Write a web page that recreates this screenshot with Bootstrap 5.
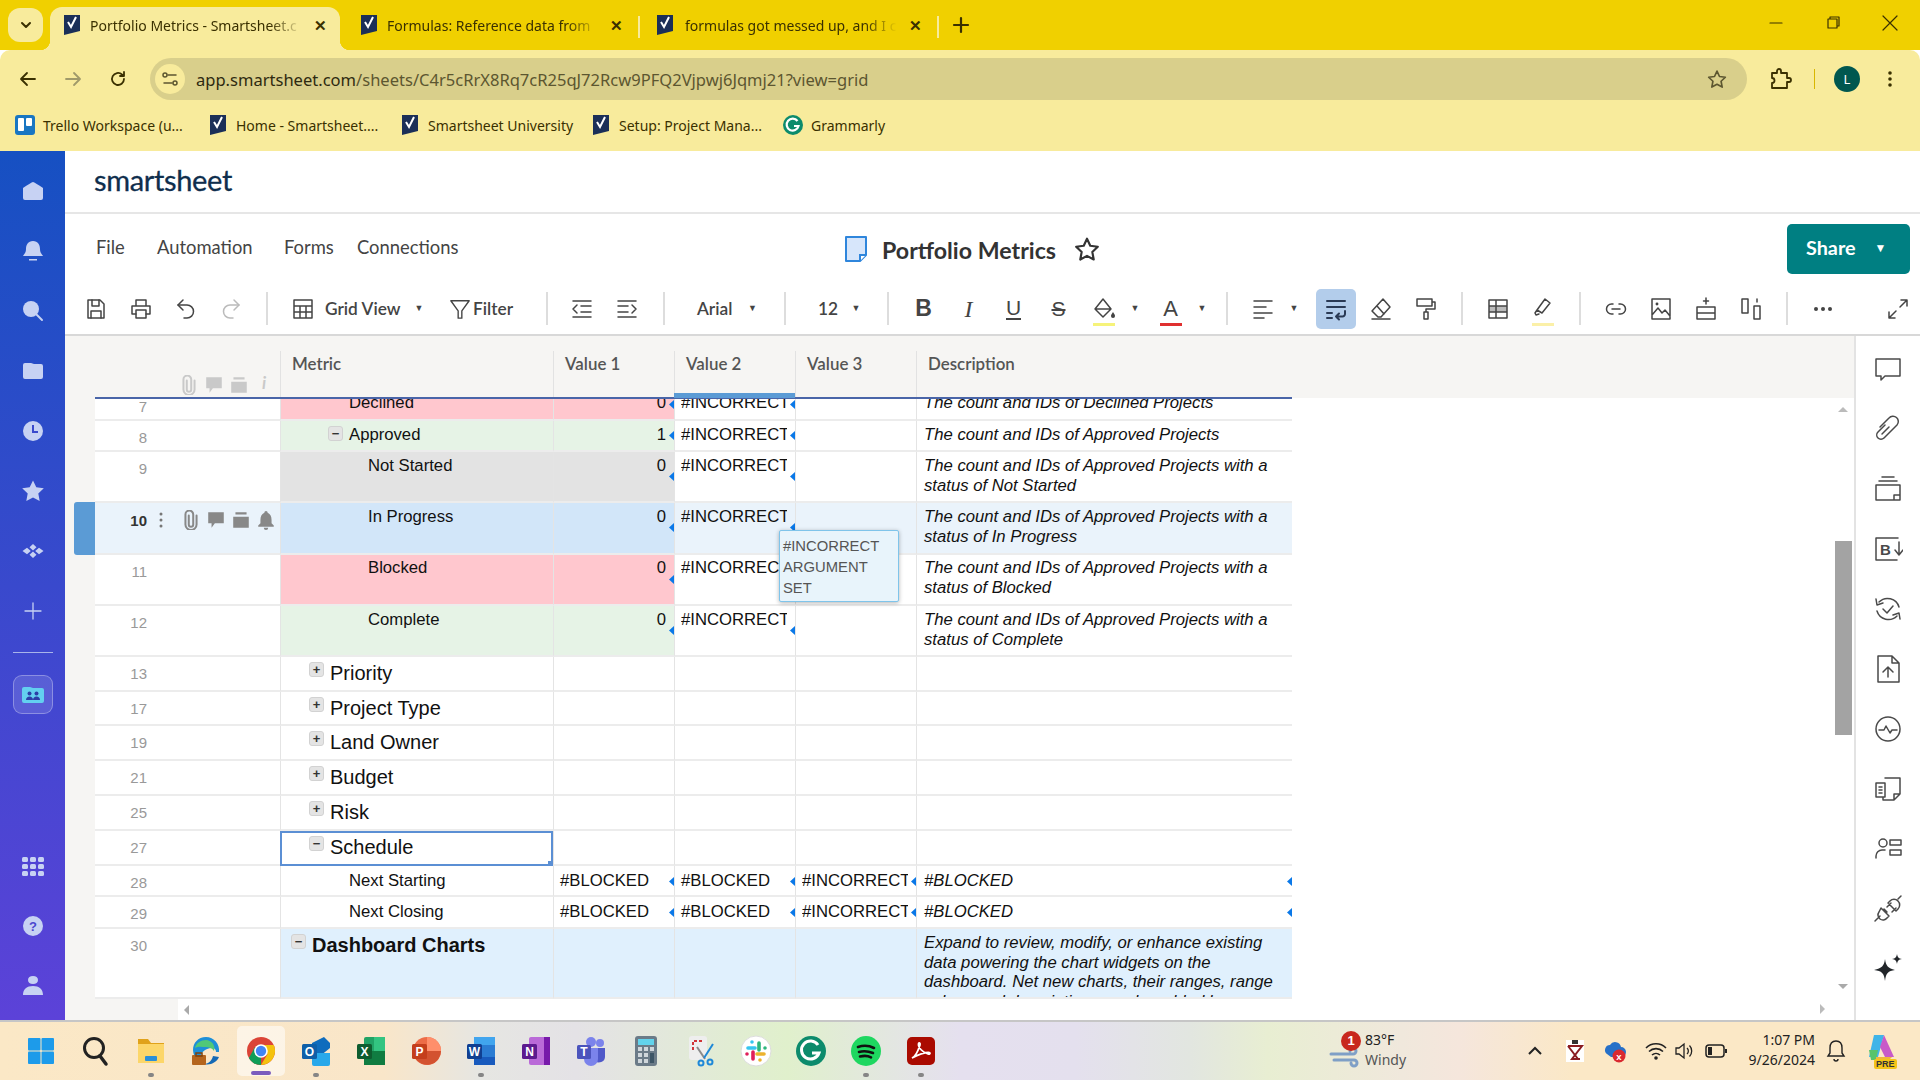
<!DOCTYPE html>
<html lang="en">
<head>
<meta charset="utf-8">
<title>Portfolio Metrics - Smartsheet</title>
<link rel="stylesheet" href="https://cdn.jsdelivr.net/npm/bootstrap@5.3.0/dist/css/bootstrap.min.css">
<style>
:root{--ar:"Liberation Sans",Arial,sans-serif;--ui:"Noto Sans",sans-serif;--sm:Lato,"Noto Sans",sans-serif}
html,body{width:1920px;height:1080px;overflow:hidden;margin:0;background:#fff;font-family:var(--ar)}
.ic{fill:none;stroke:currentColor;stroke-width:1.5;stroke-linecap:round;stroke-linejoin:round;display:block}
.s24{width:24px;height:24px}.s20{width:20px;height:20px}.s30{width:30px;height:30px}.s32{width:32px;height:32px}
.ff{fill:currentColor;stroke:none}
/* browser chrome */
.tabstrip{height:50px;background:#f0d000;padding-left:8px;color:#3a3000;font:14px var(--ui)}
.tabdown{width:35px;height:34px;margin-top:8px;border-radius:12px;background:#f8eb9c}
.chtab{height:43px;margin-top:7px;position:relative;flex:none;padding-bottom:7px}
.chtab.on{width:290px;margin-left:7px;background:#f8eb9c;border-radius:12px 12px 0 0;padding-left:12px}
.chtab.on::after,.chtab.on::before{content:"";position:absolute;bottom:0;width:10px;height:10px}
.chtab.on::after{right:-10px;background:radial-gradient(circle at 100% 0,transparent 10px,#f8eb9c 10.5px)}
.chtab.on::before{left:-10px;background:radial-gradient(circle at 0 0,transparent 10px,#f8eb9c 10.5px)}
.chtab.t2{width:300px;padding-left:11px}.chtab.t3{width:299px;padding-left:7px}
.chtab.t2::after,.chtab.t3::after{content:"";position:absolute;right:0;top:9px;height:22px;width:2px;background:#f8eb9c}
.chfav{width:20px;height:20px;flex:none}
.chtitle{white-space:nowrap;margin-left:8px;width:208px;flex:none;font-size:14px;-webkit-mask-image:linear-gradient(90deg,#000 180px,transparent 212px);mask-image:linear-gradient(90deg,#000 180px,transparent 212px)}
.t3 .chtitle{margin-left:10px;width:213px}
.chx{margin-left:14px;font-size:15px;font-weight:600;line-height:1;width:16px;text-align:center}
.t2 .chx{margin-left:13px}.t3 .chx{margin-left:9px}
.winbtn{width:57px;height:46px}
.winset{margin-right:2px}
.addrrow{height:58px;background:#f8eb9c;border-radius:10px 10px 0 0;padding:8px 0 8px 5px;color:#3a3000}
.navb{width:45px;height:42px}
.addr{width:1597px;height:42px;margin-left:10px;border-radius:21px;background:#d9cf8b;font:16.55px var(--ui);color:#5c5630;padding:0 20px 0 5px}
.addr b{font-weight:400;color:#2e2a10}
.sitebtn{width:30px;height:30px;border-radius:50%;background:#f8eb9c;margin-right:11px}
.extsl{width:40px;margin-left:13px}.chsep{width:1px;height:20px;background:#d8b600;margin-left:14px}
.avat{width:26px;height:26px;border-radius:50%;background:#00574f;color:#fff;font:13px var(--ui);margin-left:19px}
.bmrow{height:43px;background:#f8eb9c;padding:0 0 9px 15px;font:14px var(--ui);color:#3a3000}
.bmk{height:34px;flex:none}.bm1{width:193px}.bm2{width:192px}.bm3{width:192px}.bm4{width:191px}
.bmk svg{width:20px;height:20px;margin-right:8px;flex:none}
.pagewrap{height:869px}
/* sidebar */
.rail{width:65px;flex:none;height:869px;background:linear-gradient(180deg,#1650c2,#5c42d8);color:#c7d2f3;padding:10px 0 4px}
.railb{height:60px;width:65px;flex:none}
.railrule{width:40px;height:1px;background:#a9b4ea;margin:11px 0 22px}
.railbox{width:40px;height:39px;border-radius:9px;border:1px solid rgba(255,255,255,.3);background:rgba(255,255,255,.13)}
/* app header */
.logorow{height:63px;border-bottom:2px solid #e6e6e6;padding-left:29px}
.logotxt{font:400 29px/1 var(--sm);color:#0f2e4d;letter-spacing:-.35px;margin-bottom:4px;-webkit-text-stroke:.3px #0f2e4d}
.menurow{height:69px;padding-left:31px;color:#444;font:18.4px var(--sm)}
.menul{width:748px;flex:none;margin-bottom:3px}
.mi1{width:61px}.mi2{width:127px}.mi3{width:73px}
.ttl{font:700 23.2px var(--sm);color:#333;margin-top:2px}
.docic{width:24px;height:28px;margin-right:14px}
.starb{width:26px;height:26px;margin-left:18px;color:#333}
.sharebtn{width:123px;height:50px;margin-left:auto;margin-right:10px;background:#007f82;color:#fff;border:0;border-radius:5px;font:700 19.8px var(--sm);padding:0 0 3px 19px}
.sharebtn i{font-style:normal;font-size:12px;margin-left:19px}
.tbar{height:53px;padding:0 0 0 8px;border-bottom:2px solid #d8d8d8;color:#444;position:relative}
.tg{display:flex;align-items:center;height:51px;flex:none}
.g1{width:193px}.g2{width:278px;padding-left:12px}.g3{width:115px;padding-left:11px}.g4{width:119px;padding-left:32px}.g5{width:101px;padding-left:32px}.g6{width:337px;padding-left:12px}.g7{width:233px;padding-left:12px}.g8{width:116px;padding-left:12px}.g9{width:205px;padding-left:12px}.g10{width:132px;padding-left:12px}
.tsep{width:2px;height:33px;background:#ddd;flex:none}
.ti{width:45px;height:40px;flex:none;position:relative}
.ti.off{color:#bbb}
.tc{width:18px;font-size:9px;text-align:center;flex:none;color:#444}
.tc-a{margin-left:11px}.tc-n{margin-left:9px}
.tt{font:600 17.3px var(--sm);color:#444;white-space:nowrap}
.tg2tx{width:85px}.fltic{margin-left:21px;width:22px;height:22px}
.flttx{margin-left:2px}
.lb{font-family:var(--ar);font-size:22px;line-height:1;color:#444}
.lb-b{font-weight:700;font-size:23px}
.lb-i{font-family:"Liberation Serif",serif;font-style:italic;font-size:24px}
.lb-u,.lb-s{font-size:21px}
.lb-u{border-bottom:2px solid #444;padding-bottom:0;line-height:20px}
.lb-s{text-decoration:line-through;text-decoration-thickness:1.5px}
.bar{position:absolute;left:50%;margin-left:-11px;width:22px;height:3px;bottom:3px}
.bar-y{background:#f6f37a}.bar-h{background:#fbf0a8}.bar-r{background:#e03030}
.ti-on{width:40px;height:40px;background:#b3cdeb;border-radius:5px;margin:0 2.5px 0 12.5px;color:#2a3a55;flex:none}
.gapb{margin-left:4px}.gapc{margin-left:30px}
/* grid */
.gridarea{position:relative;width:1789px;height:684px;flex:none}
.ghead{height:62px;background:#f6f5f3;position:relative;display:grid;grid-template-columns:215px 273px 121px 121px 121px 376px;font:600 16.9px var(--sm);color:#555}
.hc{border-left:1px solid #e2e2e2;margin-top:15px;padding:2px 0 0 11px;height:47px}
.hc0{border:0;padding:0;position:relative}
.hics{position:absolute;left:114px;top:21px;color:#c9c9c9}
.hics>div{width:25px}
.frozen{position:absolute;left:30px;width:1197px;height:2px;bottom:-1px;background:#4a65a8;z-index:3}
.colmark{position:absolute;left:609px;width:121px;height:5px;bottom:0;background:#5b9bd5;z-index:4}
.gbody{height:601px;overflow:hidden;padding-left:30px;background:linear-gradient(90deg,#f6f5f3 30px,#fff 30px);font:16.7px/19.6px var(--ar);color:#111}
.gr{display:grid;grid-template-columns:185px 273px 121px 121px 121px 376px;width:1197px;position:relative;background:#fff}
.gr:first-child{margin-top:-8px}
.r31{height:31px}.r32{height:32px}.r34{height:34px}.r35{height:35px}.r51{height:51px}.r52{height:52px}.r70{height:70px}
.cl{border-bottom:2px solid #ececec;border-left:1px solid #e4e4e4;position:relative;padding:4px 8px 0 6px;overflow:hidden;white-space:nowrap}
.up1 .cl{padding-top:3px}
.rn,.up1 .rn{border-left:0;padding:7px 0 0 0;display:flex;color:#999;font-size:15px;overflow:visible}
.rnum{width:52px;text-align:right;flex:none}
.bg-r{background:#ffc7ce}.bg-g{background:#e6f3e6}.bg-k{background:#e3e3e3}.bg-b{background:#d2e6f9}.bg-d{background:#e0f0fd}
.sel{background:#eaf3fb}
.sel .rn{color:#333;font-weight:700;padding-top:8px}
.rowdots{margin-right:1px;flex:none}
.ricons{color:#888;margin-top:-1px}.ricons svg{margin-right:5px;flex:none}
.rowtab{position:absolute;left:-21px;top:-1px;width:21px;height:53px;background:#5b9bd5;border-radius:3px 0 0 3px}
.dsc{font-style:italic;white-space:normal;padding-right:15px;padding-left:7px}
.i1{padding-left:10px}.i2{padding-left:28px}.i3{padding-left:47px}.i4{padding-left:87px}.i3t{padding-left:68px}
.big{font-size:20px;line-height:25px;padding-top:4px}.bd{padding-top:4px;font-weight:700}
.xb{display:inline-flex;align-items:center;justify-content:center;width:15px;height:15px;border-radius:3px;background:#e4e4e4;border:1px solid #d2d2d2;font:700 13px/1 var(--ar);color:#333;margin-right:6px;vertical-align:top;margin-top:1px}
.big .xb{margin-top:1px}
.bd .xb{margin-top:1px}
.pt5{padding-top:5px}
.tx{display:block;overflow:hidden}
.fx{position:absolute;right:0;top:10px;width:5px;height:9px;background:#0a78e8;clip-path:polygon(100% 0,0 50%,100% 100%)}
.fx2{top:20px}.fx3{top:11px}
.curcell{outline:2px solid #5b8fd4;outline-offset:-2px;border-bottom-color:transparent;overflow:visible}
.curcell::after{content:"";position:absolute;right:0;bottom:-2px;width:5px;height:5px;background:#5b8fd4}
.ttip{position:absolute;left:714px;top:194px;width:120px;height:72px;background:#e8f4fb;border:1px solid #7fc4ea;box-shadow:0 1px 4px rgba(0,0,0,.3);font:14.8px/21px var(--ar);color:#555;padding:5px 3px;z-index:6;border-radius:2px}
.gfoot{height:21px;background:linear-gradient(90deg,#f6f5f3 113px,#fff 113px)}
.sthumb{position:absolute;left:1770px;top:205px;width:17px;height:194px;background:#a3a3a3;z-index:5}
.ar{position:absolute;width:0;height:0;border-style:solid;z-index:5}
.ar-u{left:1773px;top:71px;border-width:0 5px 5px 5px;border-color:transparent transparent #bbb}
.ar-d{left:1773px;top:648px;border-width:5px 5px 0 5px;border-color:#aaa transparent transparent}
.ar-l{left:119px;top:669px;border-width:5px 5px 5px 0;border-color:transparent #aaa transparent transparent}
.ar-r{left:1755px;top:668px;border-width:5px 0 5px 5px;border-color:transparent transparent transparent #bbb}
.rpanel{width:66px;height:684px;flex:none;border-left:2px solid #e3e3e3;padding-top:3px;color:#4a4a4a}
.rpb{height:60px}
/* taskbar */
.winbar{height:60px;border-top:2px solid #c6c6c6;padding-left:13px;background:linear-gradient(90deg,#fbe8c6 0,#f9e6c9 20%,#e6e6e2 25%,#e4e2e6 30%,#e0f0cc 41%,#e5e0ef 50%,#e4e0ee 56%,#e2e6e0 62%,#e8eed2 66%,#f0e8dc 73%,#f5e6dc 76%,#fbe8c6 82%);font:14px var(--ui);color:#222}
.tbi{width:55px;height:58px;flex:none;position:relative}
.tbi.act::before{content:"";position:absolute;left:3.5px;right:3.5px;top:4px;bottom:4px;border-radius:5px;background:rgba(255,255,255,.55)}
.tbi svg{width:32px;height:32px;position:relative}
.run::after{content:"";position:absolute;left:50%;margin-left:-3px;bottom:3px;width:6px;height:4px;border-radius:2px;background:#858585}
.act::after{content:"";position:absolute;left:50%;margin-left:-10px;bottom:5px;width:20px;height:4px;border-radius:2px;background:#7a5bbd}
.tray{margin-left:auto;margin-right:24px;height:58px}
.wxsl{position:relative;width:36px;height:40px;flex:none}
.wxb{position:absolute;left:12px;top:0;width:20px;height:20px;border-radius:50%;background:#c8281e;color:#fff;font:700 13px/20px var(--ar);text-align:center}
.wxt{width:161px;line-height:20px;flex:none;margin-bottom:3px}
.wxw{color:#555;display:block}
.tr-red{margin-left:22px}.tr-cl{margin-left:19px}.tr-wf{margin-left:18px}.tr-sn{margin-left:7px}.tr-bt{margin-left:11px}
.clk{width:88px;text-align:right;line-height:20px;margin-bottom:3px;flex:none}
.tr-bell{margin-left:10px}
.copi{margin-left:19px;position:relative;width:30px;height:36px;flex:none}
.prebadge{position:absolute;left:8px;bottom:0;font:700 9px/10px var(--ar);background:#f5c518;color:#333;border-radius:2px;padding:0 2px}
</style>
</head>
<body>
<svg class="d-none" xmlns="http://www.w3.org/2000/svg">
<symbol id="ss" viewBox="0 0 20 20"><path fill="#1b2f58" d="M2 0h16v16L2 20z"/><path fill="none" stroke="#fff" stroke-width="2" d="M6 7l3 5 5-10"/></symbol>
<symbol id="save" viewBox="0 0 24 24"><path d="M4 3h12l4 4v14H4z"/><path d="M8 3v6h7V3M7 21v-7h10v7"/></symbol>
<symbol id="print" viewBox="0 0 24 24"><path d="M7 9V3h10v6M7 17H3V9h18v8h-4"/><path d="M7 13h10v8H7z"/></symbol>
<symbol id="undo" viewBox="0 0 24 24"><path d="M9 3L4 8l5 5"/><path d="M4 8h9a6.500 6.500 0 0 1 0 13h-3"/></symbol>
<symbol id="redo" viewBox="0 0 24 24"><path d="M15 3l5 5-5 5"/><path d="M20 8h-9a6.500 6.500 0 0 0 0 13h3"/></symbol>
<symbol id="tbl" viewBox="0 0 24 24"><path d="M3 3h18v18H3zM3 9h18M3 15h18M9 9v12M15 9v12"/></symbol>
<symbol id="funnel" viewBox="0 0 24 24"><path d="M2 3h20l-8 11v8h-4v-8z"/></symbol>
<symbol id="outd" viewBox="0 0 24 24"><path d="M3 4h18M3 20h18M11 9h10M11 15h10M7 8l-4 4 4 4"/></symbol>
<symbol id="ind" viewBox="0 0 24 24"><path d="M3 4h18M3 20h18M3 9h10M3 15h10M17 8l4 4-4 4"/></symbol>
<symbol id="fill" viewBox="0 0 24 24"><path d="M11 2L3 12l8 8 8-8zM3 12h16"/><path fill="currentColor" stroke="none" d="M21 15c1.500 2.200 2 3 2 4a2 2 0 0 1-4 0c0-1 .5-1.800 2-4z"/></symbol>
<symbol id="align" viewBox="0 0 24 24"><path d="M3 4h18M3 10h12M3 16h18M3 21h10"/></symbol>
<symbol id="wrap" viewBox="0 0 24 24"><path stroke-width="2" d="M3 4h18M3 10h18M3 16h5M3 21h5"/><path stroke-width="2" d="M21 14v3a2.500 2.500 0 0 1-2.500 2.500H12M15 16.500l-3 3 3 3"/></symbol>
<symbol id="eraser" viewBox="0 0 24 24"><path d="M14 2l7 8-9 10H9l-6-6zM8 9l7 8M3 22h18"/></symbol>
<symbol id="roller" viewBox="0 0 24 24"><path d="M3 2h15v7H3zM18 5h3v7h-9v3M10 15h4v7h-4z"/></symbol>
<symbol id="tblm" viewBox="0 0 24 24"><path fill="#bbb" stroke="none" d="M3 9h18v6H3z"/><path d="M3 3h18v18H3zM3 9h18M3 15h18M10 3v18"/></symbol>
<symbol id="hilite" viewBox="0 0 24 24"><path d="M14 2l5 4-8 10-5-3zM6 13l-2 3 1 2 3-1"/></symbol>
<symbol id="link" viewBox="0 0 24 24"><path d="M9 7H7.500a5 5 0 0 0 0 10H9M15 7h1.500a5 5 0 0 1 0 10H15M8 12h8"/></symbol>
<symbol id="img" viewBox="0 0 24 24"><path d="M3 2h18v20H3zM3 18l6-7 4 5 3-3 5 6"/><circle cx="8" cy="7" r=".7"/></symbol>
<symbol id="insr" viewBox="0 0 24 24"><path d="M3 10h18v12H3zM3 16h18M12 1v6M9.500 4h5"/></symbol>
<symbol id="insc" viewBox="0 0 24 24"><path d="M3 2h6v14H3zM15 9h6v13h-6zM18 2v3"/></symbol>
<symbol id="more" viewBox="0 0 24 24"><circle fill="currentColor" stroke="none" cx="5" cy="12" r="2"/><circle fill="currentColor" stroke="none" cx="12" cy="12" r="2"/><circle fill="currentColor" stroke="none" cx="19" cy="12" r="2"/></symbol>
<symbol id="expand" viewBox="0 0 24 24"><path d="M14 10l7-7M15 3h6v6M10 14l-7 7M3 15v6h6"/></symbol>
<symbol id="clip" viewBox="0 0 18 18"><path fill="none" stroke="currentColor" stroke-width="1.800" stroke-linecap="round" d="M7 5v8a2 2 0 0 0 4 0V4a3.500 3.500 0 0 0-7 0v9a5 5 0 0 0 10 0V5"/></symbol>
<symbol id="cmt" viewBox="0 0 18 18"><path fill="currentColor" d="M2 2h14v10H8l-3 4v-4H2z"/></symbol>
<symbol id="card" viewBox="0 0 18 18"><path fill="currentColor" d="M2 6h14v10H2zM4 2h10v2H4z"/></symbol>
<symbol id="rbell" viewBox="0 0 18 18"><path fill="currentColor" d="M9 1a1.500 1.500 0 0 1 1.500 1.500C13 3.500 14 6 14 9v3l2 2v1H2v-1l2-2V9c0-3 1-5.500 3.500-6.500A1.500 1.500 0 0 1 9 1zM7 16h4a2 2 0 0 1-4 0z"/></symbol>
<symbol id="rhome" viewBox="0 0 24 24"><path fill="currentColor" d="M12 3c1 0 9 5 10 6v10a2 2 0 0 1-2 2H4a2 2 0 0 1-2-2V9c1-1 9-6 10-6z"/></symbol>
<symbol id="rbl" viewBox="0 0 24 24"><path fill="currentColor" d="M12 2c5 0 7 4 7 8 0 4 2 5 3 7H2c1-2 3-3 3-7 0-4 2-8 7-8zM8 20h8v1.500H8z"/></symbol>
<symbol id="rsr" viewBox="0 0 24 24"><circle fill="currentColor" cx="10" cy="10" r="8"/><path stroke="currentColor" stroke-width="2" stroke-linecap="round" d="M15 15l6 6"/></symbol>
<symbol id="rfd" viewBox="0 0 24 24"><path fill="currentColor" d="M4 4h6c1 0 2 1 3 1h7a2 2 0 0 1 2 2v11a2 2 0 0 1-2 2H4a2 2 0 0 1-2-2V6a2 2 0 0 1 2-2z"/></symbol>
<symbol id="rck" viewBox="0 0 24 24"><circle fill="currentColor" cx="12" cy="12" r="10"/><path fill="none" stroke="#3a49cc" stroke-width="2" d="M12 6v7h5"/></symbol>
<symbol id="rst" viewBox="0 0 24 24"><path fill="currentColor" d="M12 1.500l3.300 6.800 7.500 1-5.500 5.200 1.400 7.500L12 18.400l-6.700 3.600 1.400-7.500L1.200 9.300l7.500-1z"/></symbol>
<symbol id="rap" viewBox="0 0 24 24"><path fill="currentColor" d="M12 5l3.500 3.200L12 11.400 8.500 8.200zM12 12.600l3.500 3.200L12 19l-3.500-3.200zM6 8.800L9.800 12 6 15.200 1.500 12zM18 8.800l4.500 3.200-4.500 3.200L14.200 12z"/></symbol>
<symbol id="rgr" viewBox="0 0 24 24"><g fill="currentColor"><rect x="1" y="3" width="6" height="5" rx="1.500"/><rect x="9" y="3" width="6" height="5" rx="1.500"/><rect x="17" y="3" width="6" height="5" rx="1.500"/><rect x="1" y="10" width="6" height="5" rx="1.500"/><rect x="9" y="10" width="6" height="5" rx="1.500"/><rect x="17" y="10" width="6" height="5" rx="1.500"/><rect x="1" y="17" width="6" height="5" rx="1.500"/><rect x="9" y="17" width="6" height="5" rx="1.500"/><rect x="17" y="17" width="6" height="5" rx="1.500"/></g></symbol>
<symbol id="rus" viewBox="0 0 24 24"><path fill="currentColor" d="M12 2c3 0 5 1.500 5 4s-2 4-5 4-5-1.500-5-4 2-4 5-4zM12 12c6 0 10 3 10 9H2c0-6 4-9 10-9z"/></symbol>
<symbol id="pcmt" viewBox="0 0 30 30"><path d="M3 5h24v17H12l-4 4v-4H3z"/></symbol>
<symbol id="pclip" viewBox="0 0 30 30"><path d="M12 11l-7 7a4 4 0 0 0 6 6l13-13a5 5 0 0 0-8-7L7 13M16 13l-7 7"/></symbol>
<symbol id="pcard" viewBox="0 0 30 30"><path d="M9 3h12M6 7h18M3 11h24v15H3zM27 21h-6v5"/></symbol>
<symbol id="pbl" viewBox="0 0 30 30"><path d="M25 4H3v22h21"/><path d="M26 8v12M22 16l4 5 4-5"/><text x="7" y="21" font-family="Liberation Sans,sans-serif" font-weight="700" font-size="15" fill="currentColor" stroke="none">B</text></symbol>
<symbol id="pcyc" viewBox="0 0 30 30"><path d="M6 8a12 12 0 0 1 20 5M24 22a12 12 0 0 1-20-5M3 5l1 6 6-2M27 25l-1-6-6 2M10 15l4 4 6-7"/></symbol>
<symbol id="pup" viewBox="0 0 30 30"><path d="M5 2h14l7 7v19H5zM19 2v7h7M15 23V13M10 18l5-5 5 5"/></symbol>
<symbol id="pact" viewBox="0 0 30 30"><circle cx="15" cy="15" r="12"/><path d="M6 16h5l2-4 4 7 2-3h5"/></symbol>
<symbol id="pdoc" viewBox="0 0 30 30"><path d="M3 9h9v14H3zM12 4h15v16l-6 6H10v-3M27 20h-6v6M6 13h3M6 16h3M6 19h3"/></symbol>
<symbol id="ppl" viewBox="0 0 30 30"><circle cx="10" cy="9" r="4"/><path d="M3 24v-2a6 6 0 0 1 6-6h3M17 6h11v5H17zM17 16h11v5H17z"/></symbol>
<symbol id="plug" viewBox="0 0 30 30"><path d="M2 27l5-5M8 14l8 8-2 2a5 5 0 0 1-8-6zM14 13l4-4M19 18l4-4M15 9l8 8 2-2a5 5 0 0 0-8-8zM25 5l3-3M11 15l3 3"/></symbol>
<symbol id="spark" viewBox="0 0 30 30"><path fill="currentColor" stroke="none" d="M12 5c1 7 3 9 10 11-7 1-9 3-10 11-1-8-3-10-11-11 8-2 10-4 11-11zM24 0c.5 3 1.500 4.500 5 5-3.500.5-4.500 2-5 5-.5-3-1.500-4.500-5-5 3.500-.5 4.500-2 5-5z"/></symbol>
</svg>

<div class="tabstrip d-flex">
  <div class="tabdown d-flex align-items-center justify-content-center"><svg class="ic s20" viewBox="0 0 20 20"><path stroke-width="2" d="M6 8l4 4 4-4"/></svg></div>
  <div class="chtab on d-flex align-items-center"><svg class="chfav"><use href="#ss"/></svg><div class="chtitle">Portfolio Metrics - Smartsheet.c</div><div class="chx">✕</div></div>
  <div class="chtab t2 d-flex align-items-center"><svg class="chfav ms-2"><use href="#ss"/></svg><div class="chtitle">Formulas: Reference data from</div><div class="chx">✕</div></div>
  <div class="chtab t3 d-flex align-items-center"><svg class="chfav ms-2"><use href="#ss"/></svg><div class="chtitle">formulas got messed up, and I c</div><div class="chx">✕</div></div>
  <div class="chtab d-flex align-items-center ps-2 ms-1"><svg class="ic s20" viewBox="0 0 20 20"><path stroke-width="2.200" d="M10 3v14M3 10h14"/></svg></div>
  <div class="ms-auto winset d-flex">
    <div class="winbtn d-flex align-items-center justify-content-center"><svg class="ic s20" viewBox="0 0 20 20"><path stroke-width="1.200" d="M4 10h12"/></svg></div>
    <div class="winbtn d-flex align-items-center justify-content-center"><svg class="ic s20" viewBox="0 0 20 20"><path stroke-width="1.200" d="M5 6h9v9H5zM7 6V4h9v9h-2"/></svg></div>
    <div class="winbtn d-flex align-items-center justify-content-center"><svg class="ic s20" viewBox="0 0 20 20"><path stroke-width="1.200" d="M3 3l14 14M17 3L3 17"/></svg></div>
  </div>
</div>
<div class="addrrow d-flex align-items-center">
  <div class="navb d-flex align-items-center justify-content-center"><svg class="ic s20" viewBox="0 0 20 20"><path stroke-width="1.800" d="M17 10H4M9 4l-6 6 6 6"/></svg></div>
  <div class="navb d-flex align-items-center justify-content-center"><svg class="ic s20" viewBox="0 0 20 20"><path stroke-width="1.800" d="M3 10h13M11 4l6 6-6 6" stroke="#a09a6a"/></svg></div>
  <div class="navb d-flex align-items-center justify-content-center"><svg class="ic s20" viewBox="0 0 20 20"><path stroke-width="1.800" d="M16 10a6 6 0 1 1-2-4.500L16 7M16 3v4h-4"/></svg></div>
  <div class="addr d-flex align-items-center">
    <div class="sitebtn d-flex align-items-center justify-content-center"><svg class="ic s20" viewBox="0 0 20 20"><path stroke-width="1.500" d="M8 6h8M4 14h8"/><circle cx="5" cy="6" r="2"/><circle cx="15" cy="14" r="2"/></svg></div>
    <span><b>app.smartsheet.com</b>/sheets/C4r5cRrX8Rq7cR25qJ72Rcw9PFQ2Vjpwj6Jqmj21?view=grid</span>
    <svg class="ic s20 ms-auto" viewBox="0 0 24 24" stroke="#666"><path stroke-width="2" d="M12 2.500l3 6.500 7 .9-5.100 4.800 1.300 7L12 18.300l-6.200 3.400 1.300-7L2 9.900 9 9z"/></svg>
  </div>
  <div class="extsl d-flex justify-content-center"><svg class="ic s24" viewBox="0 0 24 24"><path stroke-width="1.800" d="M4 6h5V4a2 2 0 0 1 4 0v2h6v5h2a2 2 0 0 1 0 4h-2v6H4v-5a2.500 2.500 0 0 0 0-5z"/></svg></div>
  <div class="chsep"></div>
  <div class="avat d-flex align-items-center justify-content-center">L</div>
  <div class="d-flex justify-content-center ms-3 ps-1"><svg class="s20" viewBox="0 0 20 20"><g fill="#3a3000"><circle cx="10" cy="4" r="1.800"/><circle cx="10" cy="10" r="1.800"/><circle cx="10" cy="16" r="1.800"/></g></svg></div>
</div>
<div class="bmrow d-flex align-items-center">
  <div class="bmk bm1 d-flex align-items-center"><svg viewBox="0 0 20 20"><rect width="20" height="20" rx="3" fill="#1976c2"/><rect x="3" y="3" width="6" height="13" rx="1" fill="#fff"/><rect x="11" y="3" width="6" height="8" rx="1" fill="#fff"/></svg>Trello Workspace (u...</div>
  <div class="bmk bm3 d-flex align-items-center"><svg><use href="#ss"/></svg>Home - Smartsheet....</div>
  <div class="bmk bm4 d-flex align-items-center"><svg><use href="#ss"/></svg>Smartsheet University</div>
  <div class="bmk bm2 d-flex align-items-center"><svg><use href="#ss"/></svg>Setup: Project Mana...</div>
  <div class="bmk d-flex align-items-center"><svg viewBox="0 0 20 20"><circle cx="10" cy="10" r="10" fill="#0c8b6c"/><path fill="none" stroke="#fff" stroke-width="2.200" d="M14.500 6a6 6 0 1 0 1 5H11"/></svg>Grammarly</div>
</div>

<div class="pagewrap d-flex">
  <nav class="rail d-flex flex-column align-items-center">
    <div class="railb d-flex align-items-center justify-content-center"><svg class="s24"><use href="#rhome"/></svg></div>
    <div class="railb d-flex align-items-center justify-content-center"><svg class="s24"><use href="#rbl"/></svg></div>
    <div class="railb d-flex align-items-center justify-content-center"><svg class="s24"><use href="#rsr"/></svg></div>
    <div class="railb d-flex align-items-center justify-content-center"><svg class="s24"><use href="#rfd"/></svg></div>
    <div class="railb d-flex align-items-center justify-content-center"><svg class="s24"><use href="#rck"/></svg></div>
    <div class="railb d-flex align-items-center justify-content-center"><svg class="s24"><use href="#rst"/></svg></div>
    <div class="railb d-flex align-items-center justify-content-center"><svg class="s24"><use href="#rap"/></svg></div>
    <div class="railb d-flex align-items-center justify-content-center"><svg class="ic s20" viewBox="0 0 20 20"><path stroke-width="1.300" d="M10 2v16M2 10h16"/></svg></div>
    <div class="railrule"></div>
    <div class="railbox d-flex align-items-center justify-content-center"><svg class="s24" viewBox="0 0 24 24"><path fill="#63cff0" d="M3 4h6c1 0 2 1 3 1h9a2 2 0 0 1 2 2v11a2 2 0 0 1-2 2H3a2 2 0 0 1-2-2V6a2 2 0 0 1 2-2z"/><g fill="#2c3fa8"><circle cx="8.500" cy="10.500" r="2"/><circle cx="15.500" cy="10.500" r="2"/><path d="M5 17c0-2 1.500-3.500 3.500-3.500S12 15 12 17zM12 17c0-2 1.500-3.500 3.500-3.500S19 15 19 17z"/></g></svg></div>
    <div class="railb d-flex align-items-center justify-content-center mt-auto"><svg class="s24"><use href="#rgr"/></svg></div>
    <div class="railb d-flex align-items-center justify-content-center"><svg class="s24" viewBox="0 0 24 24"><circle fill="currentColor" cx="12" cy="12" r="10"/><text x="12" y="16.500" text-anchor="middle" font-family="Liberation Sans,sans-serif" font-weight="700" font-size="13" fill="#4a47cf">?</text></svg></div>
    <div class="railb d-flex align-items-center justify-content-center"><svg class="s24"><use href="#rus"/></svg></div>
  </nav>

  <main class="flex-grow-1">
    <div class="logorow d-flex align-items-center"><span class="logotxt">smartsheet</span></div>
    <div class="menurow d-flex align-items-center">
      <div class="menul d-flex"><span class="mi1">File</span><span class="mi2">Automation</span><span class="mi3">Forms</span><span>Connections</span></div>
      <svg class="docic" viewBox="0 0 24 28"><path fill="#d7e6fb" stroke="#2f86dc" stroke-width="2" stroke-linejoin="round" d="M2 2h20v18l-6 6H2z"/><path fill="#fff" stroke="#2f86dc" stroke-width="2" d="M22 20h-6v6"/></svg>
      <span class="ttl">Portfolio Metrics</span>
      <svg class="ic starb" viewBox="0 0 24 24"><path stroke-width="2" d="M12 2.500l3 6.500 7 .9-5.100 4.800 1.300 7L12 18.300l-6.200 3.400 1.300-7L2 9.900 9 9z"/></svg>
      <button class="sharebtn d-flex align-items-center justify-content-start" type="button">Share<i>▼</i></button>
    </div>
    <div class="tbar d-flex align-items-center">
      <div class="tg g1">
        <div class="ti d-flex align-items-center justify-content-center"><svg class="ic s24"><use href="#save"/></svg></div>
        <div class="ti d-flex align-items-center justify-content-center"><svg class="ic s24"><use href="#print"/></svg></div>
        <div class="ti d-flex align-items-center justify-content-center"><svg class="ic s24"><use href="#undo"/></svg></div>
        <div class="ti off d-flex align-items-center justify-content-center"><svg class="ic s24"><use href="#redo"/></svg></div>
      </div>
      <div class="tsep"></div>
      <div class="tg g2">
        <div class="ti d-flex align-items-center justify-content-center"><svg class="ic s24"><use href="#tbl"/></svg></div>
        <span class="tt tg2tx">Grid View</span><span class="tc">▼</span>
        <svg class="ic fltic"><use href="#funnel"/></svg><span class="tt flttx">Filter</span>
      </div>
      <div class="tsep"></div>
      <div class="tg g3">
        <div class="ti d-flex align-items-center justify-content-center"><svg class="ic s24"><use href="#outd"/></svg></div>
        <div class="ti d-flex align-items-center justify-content-center"><svg class="ic s24"><use href="#ind"/></svg></div>
      </div>
      <div class="tsep"></div>
      <div class="tg g4"><span class="tt">Arial</span><span class="tc tc-a">▼</span></div>
      <div class="tsep"></div>
      <div class="tg g5"><span class="tt">12</span><span class="tc tc-n">▼</span></div>
      <div class="tsep"></div>
      <div class="tg g6">
        <div class="ti d-flex align-items-center justify-content-center"><span class="lb lb-b">B</span></div>
        <div class="ti d-flex align-items-center justify-content-center"><span class="lb lb-i">I</span></div>
        <div class="ti d-flex align-items-center justify-content-center"><span class="lb lb-u">U</span></div>
        <div class="ti d-flex align-items-center justify-content-center"><span class="lb lb-s">S</span></div>
        <div class="ti d-flex align-items-center justify-content-center"><svg class="ic s24"><use href="#fill"/></svg><span class="bar bar-y"></span></div><span class="tc">▼</span>
        <div class="ti gapb d-flex align-items-center justify-content-center"><span class="lb">A</span><span class="bar bar-r"></span></div><span class="tc">▼</span>
      </div>
      <div class="tsep"></div>
      <div class="tg g7">
        <div class="ti d-flex align-items-center justify-content-center"><svg class="ic s24"><use href="#align"/></svg></div><span class="tc">▼</span>
        <div class="ti-on d-flex align-items-center justify-content-center"><svg class="ic s24"><use href="#wrap"/></svg></div>
        <div class="ti d-flex align-items-center justify-content-center"><svg class="ic s24"><use href="#eraser"/></svg></div>
        <div class="ti d-flex align-items-center justify-content-center"><svg class="ic s24"><use href="#roller"/></svg></div>
      </div>
      <div class="tsep"></div>
      <div class="tg g8">
        <div class="ti d-flex align-items-center justify-content-center"><svg class="ic s24"><use href="#tblm"/></svg></div>
        <div class="ti d-flex align-items-center justify-content-center"><svg class="ic s24"><use href="#hilite"/></svg><span class="bar bar-h"></span></div>
      </div>
      <div class="tsep"></div>
      <div class="tg g9">
        <div class="ti d-flex align-items-center justify-content-center"><svg class="ic s24"><use href="#link"/></svg></div>
        <div class="ti d-flex align-items-center justify-content-center"><svg class="ic s24"><use href="#img"/></svg></div>
        <div class="ti d-flex align-items-center justify-content-center"><svg class="ic s24"><use href="#insr"/></svg></div>
        <div class="ti d-flex align-items-center justify-content-center"><svg class="ic s24"><use href="#insc"/></svg></div>
      </div>
      <div class="tsep"></div>
      <div class="tg g10">
        <div class="ti d-flex align-items-center justify-content-center"><svg class="ic s24"><use href="#more"/></svg></div>
        <div class="ti gapc d-flex align-items-center justify-content-center"><svg class="ic s24"><use href="#expand"/></svg></div>
      </div>
    </div>

    <div class="d-flex">
      <section class="gridarea">
        <div class="ghead">
          <div class="hc hc0"><div class="hics d-flex"><div><svg class="s20"><use href="#clip"/></svg></div><div><svg class="s20"><use href="#cmt"/></svg></div><div><svg class="s20"><use href="#card"/></svg></div><div class="fst-italic fw-bold ps-2">i</div></div></div>
          <div class="hc">Metric</div><div class="hc">Value 1</div><div class="hc">Value 2</div><div class="hc">Value 3</div><div class="hc">Description</div>
          <div class="frozen"></div><div class="colmark"></div>
        </div>
        <div class="gbody">
          <div class="gr r31 up1"><div class="cl rn"><span class="rnum">7</span></div><div class="cl i3t bg-r">Declined</div><div class="cl text-end bg-r">0<i class="fx"></i></div><div class="cl"><span class="tx">#INCORRECT</span><i class="fx"></i></div><div class="cl"></div><div class="cl dsc">The count and IDs of Declined Projects</div></div>
          <div class="gr r31"><div class="cl rn"><span class="rnum">8</span></div><div class="cl i3 bg-g"><span class="xb">−</span>Approved</div><div class="cl text-end bg-g">1<i class="fx"></i></div><div class="cl"><span class="tx">#INCORRECT</span><i class="fx"></i></div><div class="cl"></div><div class="cl dsc">The count and IDs of Approved Projects</div></div>
          <div class="gr r51"><div class="cl rn"><span class="rnum">9</span></div><div class="cl i4 bg-k">Not Started</div><div class="cl text-end bg-k">0<i class="fx fx2"></i></div><div class="cl"><span class="tx">#INCORRECT</span><i class="fx fx2"></i></div><div class="cl"></div><div class="cl dsc">The count and IDs of Approved Projects with a status of Not Started</div></div>
          <div class="gr r52 sel"><div class="cl rn"><span class="rnum">10</span>
              <div class="d-flex ricons">
                <svg class="rowdots" width="29" height="20" viewBox="0 0 29 20"><g fill="#777"><circle cx="14" cy="4" r="1.500"/><circle cx="14" cy="10" r="1.500"/><circle cx="14" cy="16" r="1.500"/></g></svg>
                <svg class="s20"><use href="#clip"/></svg><svg class="s20"><use href="#cmt"/></svg><svg class="s20"><use href="#card"/></svg><svg class="s20"><use href="#rbell"/></svg>
              </div>
              <span class="rowtab"></span></div><div class="cl i4 bg-b">In Progress</div><div class="cl text-end bg-b">0<i class="fx fx2"></i></div><div class="cl"><span class="tx">#INCORRECT</span><i class="fx fx2"></i></div><div class="cl"></div><div class="cl dsc">The count and IDs of Approved Projects with a status of In Progress</div></div>
          <div class="gr r51 up1"><div class="cl rn"><span class="rnum">11</span></div><div class="cl i4 bg-r">Blocked</div><div class="cl text-end bg-r">0<i class="fx fx2"></i></div><div class="cl"><span class="tx">#INCORRECT</span><i class="fx fx2"></i></div><div class="cl"></div><div class="cl dsc">The count and IDs of Approved Projects with a status of Blocked</div></div>
          <div class="gr r51"><div class="cl rn"><span class="rnum">12</span></div><div class="cl i4 bg-g">Complete</div><div class="cl text-end bg-g">0<i class="fx fx2"></i></div><div class="cl"><span class="tx">#INCORRECT</span><i class="fx fx2"></i></div><div class="cl"></div><div class="cl dsc">The count and IDs of Approved Projects with a status of Complete</div></div>
          <div class="gr r35"><div class="cl rn"><span class="rnum">13</span></div><div class="cl i2 big"><span class="xb">+</span>Priority</div><div class="cl"></div><div class="cl"></div><div class="cl"></div><div class="cl"></div></div>
          <div class="gr r34"><div class="cl rn"><span class="rnum">17</span></div><div class="cl i2 big"><span class="xb">+</span>Project Type</div><div class="cl"></div><div class="cl"></div><div class="cl"></div><div class="cl"></div></div>
          <div class="gr r35"><div class="cl rn"><span class="rnum">19</span></div><div class="cl i2 big"><span class="xb">+</span>Land Owner</div><div class="cl"></div><div class="cl"></div><div class="cl"></div><div class="cl"></div></div>
          <div class="gr r35"><div class="cl rn"><span class="rnum">21</span></div><div class="cl i2 big"><span class="xb">+</span>Budget</div><div class="cl"></div><div class="cl"></div><div class="cl"></div><div class="cl"></div></div>
          <div class="gr r35"><div class="cl rn"><span class="rnum">25</span></div><div class="cl i2 big"><span class="xb">+</span>Risk</div><div class="cl"></div><div class="cl"></div><div class="cl"></div><div class="cl"></div></div>
          <div class="gr r35"><div class="cl rn"><span class="rnum">27</span></div><div class="cl i2 big curcell"><span class="xb">−</span>Schedule</div><div class="cl"></div><div class="cl"></div><div class="cl"></div><div class="cl"></div></div>
          <div class="gr r31"><div class="cl rn"><span class="rnum">28</span></div><div class="cl i3t pt5">Next Starting</div><div class="cl pt5">#BLOCKED<i class="fx fx3"></i></div><div class="cl pt5">#BLOCKED<i class="fx fx3"></i></div><div class="cl pt5"><span class="tx">#INCORRECT</span><i class="fx fx3"></i></div><div class="cl dsc pt5">#BLOCKED<i class="fx fx3"></i></div></div>
          <div class="gr r32"><div class="cl rn"><span class="rnum">29</span></div><div class="cl i3t pt5">Next Closing</div><div class="cl pt5">#BLOCKED<i class="fx fx3"></i></div><div class="cl pt5">#BLOCKED<i class="fx fx3"></i></div><div class="cl pt5"><span class="tx">#INCORRECT</span><i class="fx fx3"></i></div><div class="cl dsc pt5">#BLOCKED<i class="fx fx3"></i></div></div>
          <div class="gr r70"><div class="cl rn"><span class="rnum">30</span></div><div class="cl i1 big bd bg-d"><span class="xb">−</span>Dashboard Charts</div><div class="cl bg-d"></div><div class="cl bg-d"></div><div class="cl bg-d"></div><div class="cl dsc bg-d">Expand to review, modify, or enhance existing data powering the chart widgets on the dashboard. Net new charts, their ranges, range values and descriptions can be added here.</div></div>
        </div>
        <div class="gfoot"></div>
        <div class="ttip">#INCORRECT<br>ARGUMENT<br>SET</div>
        <div class="sthumb"></div>
        <span class="ar ar-u"></span><span class="ar ar-d"></span><span class="ar ar-l"></span><span class="ar ar-r"></span>
      </section>
      <aside class="rpanel">
        <div class="rpb d-flex align-items-center justify-content-center"><svg class="ic s30"><use href="#pcmt"/></svg></div>
        <div class="rpb d-flex align-items-center justify-content-center"><svg class="ic s30"><use href="#pclip"/></svg></div>
        <div class="rpb d-flex align-items-center justify-content-center"><svg class="ic s30"><use href="#pcard"/></svg></div>
        <div class="rpb d-flex align-items-center justify-content-center"><svg class="ic s30"><use href="#pbl"/></svg></div>
        <div class="rpb d-flex align-items-center justify-content-center"><svg class="ic s30"><use href="#pcyc"/></svg></div>
        <div class="rpb d-flex align-items-center justify-content-center"><svg class="ic s30"><use href="#pup"/></svg></div>
        <div class="rpb d-flex align-items-center justify-content-center"><svg class="ic s30"><use href="#pact"/></svg></div>
        <div class="rpb d-flex align-items-center justify-content-center"><svg class="ic s30"><use href="#pdoc"/></svg></div>
        <div class="rpb d-flex align-items-center justify-content-center"><svg class="ic s30"><use href="#ppl"/></svg></div>
        <div class="rpb d-flex align-items-center justify-content-center"><svg class="ic s30"><use href="#plug"/></svg></div>
        <div class="rpb d-flex align-items-center justify-content-center"><svg class="s30 text-dark"><use href="#spark"/></svg></div>
      </aside>
    </div>
  </main>
</div>

<footer class="winbar d-flex">
  <div class="tbi d-flex align-items-center justify-content-center"><svg viewBox="0 0 32 32"><g fill="#1d9bea"><rect x="3" y="3" width="12.500" height="12.500" rx="1"/><rect x="16.500" y="3" width="12.500" height="12.500" rx="1"/><rect x="3" y="16.500" width="12.500" height="12.500" rx="1"/><rect x="16.500" y="16.500" width="12.500" height="12.500" rx="1"/></g></svg></div>
  <div class="tbi d-flex align-items-center justify-content-center"><svg viewBox="0 0 32 32"><circle cx="14" cy="13" r="9.500" fill="none" stroke="#222" stroke-width="3"/><path d="M20 21l6 8" stroke="#222" stroke-width="3.500" stroke-linecap="round"/></svg></div>
  <div class="tbi run d-flex align-items-center justify-content-center"><svg viewBox="0 0 32 32"><path fill="#e0a21a" d="M3 4h10l3 4h13v20H3z"/><path fill="#fcd669" d="M3 9h26v19H3z"/><rect x="10" y="21" width="12" height="5" rx="1" fill="#2a8fd8"/></svg></div>
  <div class="tbi d-flex align-items-center justify-content-center"><svg viewBox="0 0 32 32"><path fill="#1d8fd8" d="M16 2C8 2 3 8 3 15c0 4 2 8 6 11 1-8 6-13 13-13 3 0 4 2 4 4l3 0c1-8-5-15-13-15z"/><path fill="#50c878" d="M16 12c3 0 6 1 8 4 2-6-3-11-8-11-5 0-10 3-11 8 3-2 7-1 11-1z"/><path fill="#1469b5" d="M23 21c-1 4-4 8-9 8 6 2 13-2 15-7z"/><rect x="2" y="20" width="14" height="10" rx="1" fill="#b5651d"/><rect x="6" y="18" width="6" height="3" fill="none" stroke="#7a4310" stroke-width="1.500"/></svg></div>
  <div class="tbi act d-flex align-items-center justify-content-center"><svg viewBox="0 0 32 32"><circle cx="16" cy="16" r="14" fill="#db4437"/><path fill="#0f9d58" d="M16 30a14 14 0 0 1-12.100-7L10 12l6 10z"/><path fill="#f4c20d" d="M16 30l6.500-11L16 10h12.700A14 14 0 0 1 16 30z"/><circle cx="16" cy="16" r="6.800" fill="#fff"/><circle cx="16" cy="16" r="5.200" fill="#4285f4"/></svg></div>
  <div class="tbi run d-flex align-items-center justify-content-center"><svg viewBox="0 0 32 32"><path fill="#0f6cbd" d="M12 8L24 2l6 6v5l-10 8H12z"/><path fill="#28a8ea" d="M12 18h18v11a2 2 0 0 1-2 2H14a2 2 0 0 1-2-2z"/><rect x="2" y="9" width="15" height="15" rx="1.500" fill="#0f5fa8"/><text x="9.500" y="21" text-anchor="middle" font-family="Liberation Sans,sans-serif" font-weight="700" font-size="12" fill="#fff">O</text></svg></div>
  <div class="tbi d-flex align-items-center justify-content-center"><svg viewBox="0 0 32 32"><rect x="9" y="2" width="21" height="28" rx="2" fill="#21a366"/><rect x="19" y="2" width="11" height="14" fill="#33c481"/><rect x="9" y="16" width="21" height="14" fill="#107c41"/><rect x="2" y="9" width="15" height="15" rx="1.500" fill="#0e5c2f"/><text x="9.500" y="21" text-anchor="middle" font-family="Liberation Sans,sans-serif" font-weight="700" font-size="12" fill="#fff">X</text></svg></div>
  <div class="tbi d-flex align-items-center justify-content-center"><svg viewBox="0 0 32 32"><circle cx="17" cy="16" r="14" fill="#ed6c47"/><path fill="#ff8f6b" d="M17 2a14 14 0 0 1 14 14H17z"/><path fill="#d35230" d="M31 16a14 14 0 0 1-26 7V16z"/><rect x="2" y="9" width="15" height="15" rx="1.500" fill="#c43e1c"/><text x="9.500" y="21" text-anchor="middle" font-family="Liberation Sans,sans-serif" font-weight="700" font-size="12" fill="#fff">P</text></svg></div>
  <div class="tbi run d-flex align-items-center justify-content-center"><svg viewBox="0 0 32 32"><rect x="9" y="2" width="21" height="28" rx="2" fill="#2b7cd3"/><rect x="9" y="2" width="21" height="8" fill="#41a5ee"/><rect x="9" y="22" width="21" height="8" fill="#185abd"/><rect x="2" y="9" width="15" height="15" rx="1.500" fill="#103f91"/><text x="9.500" y="21" text-anchor="middle" font-family="Liberation Sans,sans-serif" font-weight="700" font-size="12" fill="#fff">W</text></svg></div>
  <div class="tbi d-flex align-items-center justify-content-center"><svg viewBox="0 0 32 32"><rect x="9" y="2" width="21" height="28" rx="2" fill="#ba6ad8"/><rect x="24" y="2" width="6" height="28" fill="#7719aa"/><rect x="2" y="9" width="15" height="15" rx="1.500" fill="#5c1a8e"/><text x="9.500" y="21" text-anchor="middle" font-family="Liberation Sans,sans-serif" font-weight="700" font-size="12" fill="#fff">N</text></svg></div>
  <div class="tbi d-flex align-items-center justify-content-center"><svg viewBox="0 0 32 32"><circle cx="25" cy="8" r="4" fill="#7b83eb"/><circle cx="16" cy="7" r="5" fill="#7b83eb"/><path fill="#5059c9" d="M20 13h10v9a6 6 0 0 1-10 4z"/><path fill="#7b83eb" d="M9 13h14v11a7 7 0 0 1-14 0z"/><rect x="2" y="10" width="14" height="14" rx="1.500" fill="#4b53bc"/><text x="9" y="21" text-anchor="middle" font-family="Liberation Sans,sans-serif" font-weight="700" font-size="12" fill="#fff">T</text></svg></div>
  <div class="tbi d-flex align-items-center justify-content-center"><svg viewBox="0 0 32 32"><rect x="5" y="1" width="22" height="30" rx="3" fill="#6b7b88"/><rect x="8" y="4" width="16" height="6" fill="#62d3ec"/><g fill="#cfd6db"><rect x="8" y="12" width="4" height="4"/><rect x="14" y="12" width="4" height="4"/><rect x="20" y="12" width="4" height="4"/><rect x="8" y="18" width="4" height="4"/><rect x="14" y="18" width="4" height="4"/><rect x="8" y="24" width="4" height="4"/><rect x="14" y="24" width="4" height="4"/></g><rect x="20" y="18" width="4" height="10" fill="#3d5566"/></svg></div>
  <div class="tbi d-flex align-items-center justify-content-center"><svg viewBox="0 0 32 32"><rect x="4" y="1" width="18" height="24" rx="3" fill="#eee"/><path fill="none" stroke="#d13438" stroke-width="2" stroke-dasharray="3 2" d="M8 15V6h10"/><path stroke="#8a8a8a" stroke-width="2" d="M12 12l8 12"/><path stroke="#1e88d8" stroke-width="2" d="M28 9l-9 14"/><circle cx="25" cy="27" r="2.500" fill="none" stroke="#1e88d8" stroke-width="2"/><circle cx="16" cy="28" r="2.500" fill="none" stroke="#1e88d8" stroke-width="2"/></svg></div>
  <div class="tbi d-flex align-items-center justify-content-center"><svg viewBox="0 0 32 32"><circle cx="16" cy="16" r="15" fill="#fff" stroke="#ddd"/><g stroke-width="3.600" stroke-linecap="round"><path stroke="#36c5f0" d="M8 13h7M12 7v0"/><path stroke="#2eb67d" d="M19 8v7M25 13v0"/><path stroke="#ecb22e" d="M24 19h-7M20 25v0"/><path stroke="#e01e5a" d="M13 24v-7M7 19v0"/></g></svg></div>
  <div class="tbi d-flex align-items-center justify-content-center"><svg viewBox="0 0 32 32"><circle cx="16" cy="16" r="15" fill="#0c8b6c"/><path fill="none" stroke="#fff" stroke-width="3" d="M23 10a9 9 0 1 0 1 8h-7"/></svg></div>
  <div class="tbi run d-flex align-items-center justify-content-center"><svg viewBox="0 0 32 32"><circle cx="16" cy="16" r="15" fill="#1ed760"/><g fill="none" stroke="#111" stroke-width="2.600" stroke-linecap="round"><path d="M8 12c6-2 11-1.500 16 1"/><path d="M9 17c5-1.500 9-1 14 1"/><path d="M10 21.500c4-1 8-.8 11 .8"/></g></svg></div>
  <div class="tbi run d-flex align-items-center justify-content-center"><svg viewBox="0 0 32 32"><rect x="2" y="2" width="28" height="28" rx="5" fill="#aa0a00"/><path fill="none" stroke="#fff" stroke-width="1.800" d="M7 23c3-1 6-7 8-13 .5-2-1-3-1.500-1-.5 3 4 9 10 10 2 .3 2-1.500 0-1.500-4 0-10 2-16.500 5.500z"/></svg></div>
  <div class="tray d-flex align-items-center">
    <div class="wxsl"><svg width="34" height="30" viewBox="0 0 34 30" class="mt-2"><g fill="none" stroke="#7f9fc6" stroke-width="3" stroke-linecap="round"><path d="M2 15h22a3 3 0 1 0-3-3"/><path d="M5 21h20a3 3 0 1 1-3 3"/></g></svg><span class="wxb">1</span></div>
    <div class="wxt">83°F<span class="wxw">Windy</span></div>
    <svg width="18" height="18" viewBox="0 0 18 18"><path d="M3 12l6-6 6 6" fill="none" stroke="#222" stroke-width="2"/></svg>
    <svg class="tr-red" width="18" height="22" viewBox="0 0 18 22"><rect width="18" height="22" fill="#fff"/><path d="M2 6h14L6 19h8M2 6l10 13" fill="none" stroke="#8a1c22" stroke-width="2"/><rect x="6" y="0" width="6" height="4" fill="#333"/></svg>
    <svg class="tr-cl" width="24" height="24" viewBox="0 0 24 24"><path fill="#2670c8" d="M4 15a5 5 0 0 1 3-9 6 6 0 0 1 11 2 5 5 0 0 1 0 10H8z"/><circle cx="16" cy="17" r="6.500" fill="#d9292f"/><text x="16" y="20.500" text-anchor="middle" font-family="Liberation Sans,sans-serif" font-weight="700" font-size="9.500" fill="#fff">x</text></svg>
    <svg class="tr-wf" width="22" height="20" viewBox="0 0 22 20"><g fill="none" stroke="#222" stroke-width="1.600"><path d="M1 7a14 14 0 0 1 20 0M4 10.500a10 10 0 0 1 14 0M7 14a6 6 0 0 1 8 0"/></g><circle cx="11" cy="17" r="1.800" fill="#222"/></svg>
    <svg class="tr-sn" width="20" height="20" viewBox="0 0 20 20"><g fill="none" stroke="#222" stroke-width="1.300"><path d="M2 7h3l5-4v14l-5-4H2z"/><path d="M13 7a4 4 0 0 1 0 6M15.500 4.500a8 8 0 0 1 0 11"/></g></svg>
    <svg class="tr-bt" width="22" height="20" viewBox="0 0 22 20"><rect x="1" y="4" width="18" height="12" rx="3" fill="none" stroke="#222" stroke-width="1.500"/><rect x="3" y="6" width="4" height="8" fill="#222"/><rect x="20" y="8" width="2" height="4" fill="#222"/></svg>
    <div class="clk">1:07 PM<br>9/26/2024</div>
    <svg class="tr-bell" width="22" height="24" viewBox="0 0 22 24"><path d="M11 2c4 0 6 3 6 7v5l2 3H3l2-3V9c0-4 2-7 6-7zM9 20a2 2 0 0 0 4 0" fill="none" stroke="#222" stroke-width="1.400"/></svg>
    <div class="copi"><svg width="30" height="32" viewBox="0 0 30 32"><path fill="#3fb4e8" d="M8 2h10l-6 22H3z"/><path fill="#57c46a" d="M3 17h9l-2 10H5z"/><path fill="#c85ac8" d="M18 2l10 22h-9l-5-10z"/><path fill="#f0b83a" d="M10 24h16l-4 4H10z"/></svg><span class="prebadge">PRE</span></div>
  </div>
</footer>
</body>
</html>
